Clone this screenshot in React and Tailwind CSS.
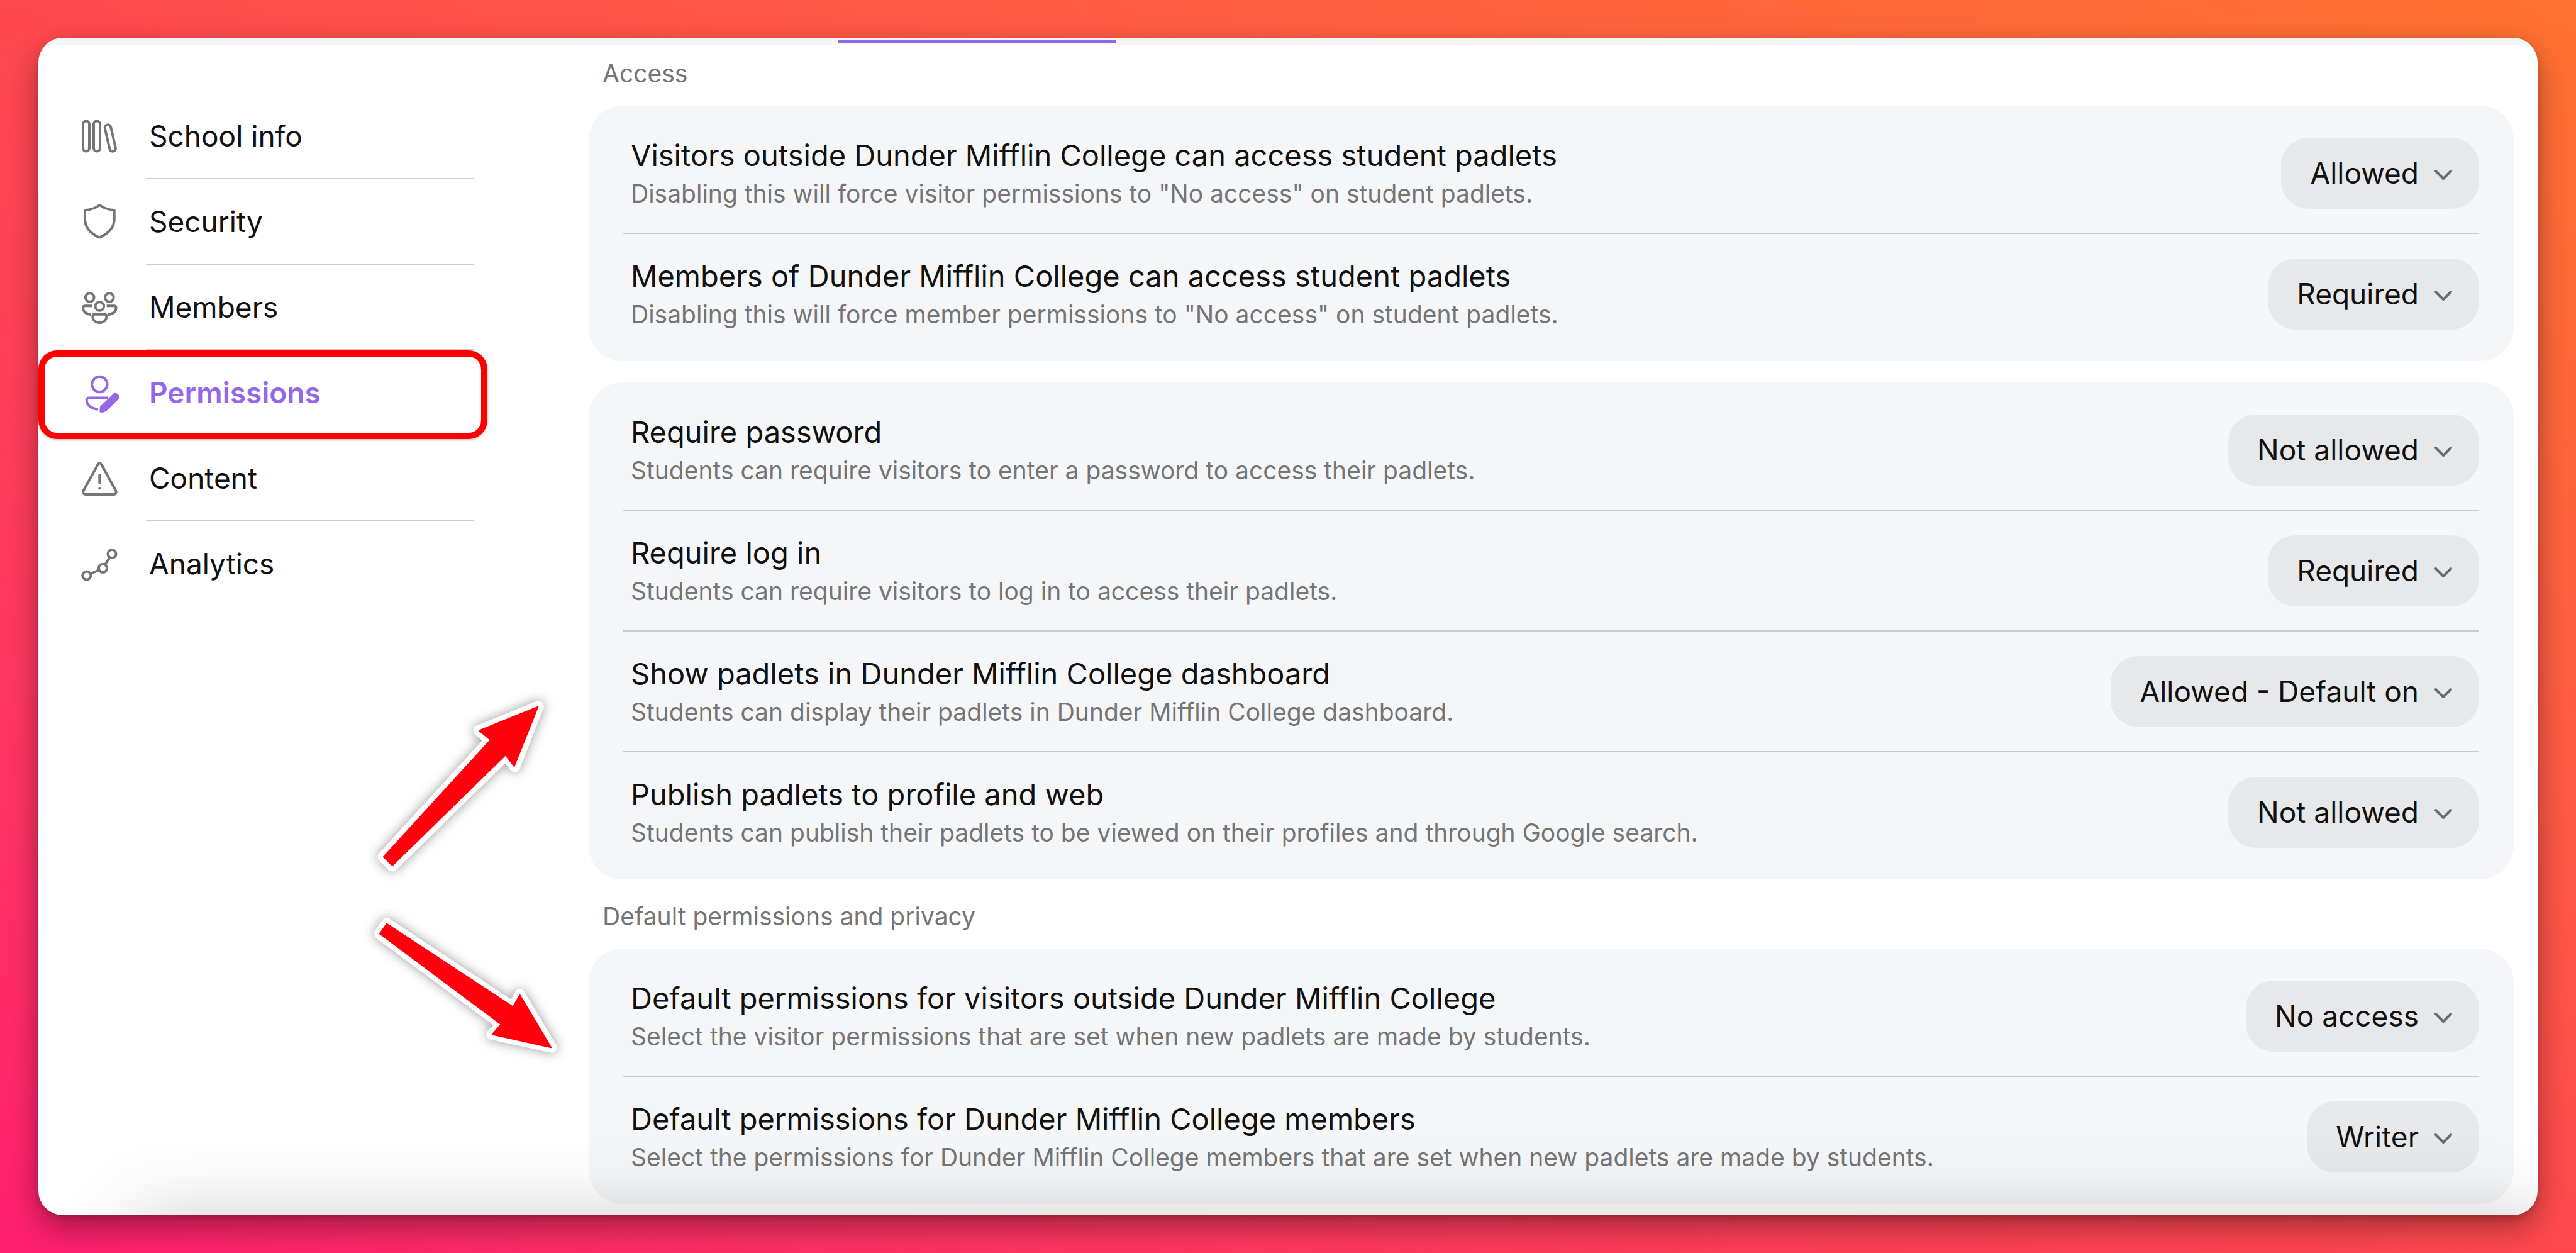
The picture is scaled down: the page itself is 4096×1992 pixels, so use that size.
const GROUPS = [
  {
    heading: 'Access',
    cards: [
      [
        {
          id: 'visitor-access',
          title: 'Visitors outside Dunder Mifflin College can access student padlets',
          description: 'Disabling this will force visitor permissions to "No access" on student padlets.',
          value: 'Allowed',
        },
        {
          id: 'member-access',
          title: 'Members of Dunder Mifflin College can access student padlets',
          description: 'Disabling this will force member permissions to "No access" on student padlets.',
          value: 'Required',
        },
      ],
      [
        {
          id: 'require-password',
          title: 'Require password',
          description: 'Students can require visitors to enter a password to access their padlets.',
          value: 'Not allowed',
        },
        {
          id: 'require-login',
          title: 'Require log in',
          description: 'Students can require visitors to log in to access their padlets.',
          value: 'Required',
        },
        {
          id: 'show-in-dashboard',
          title: 'Show padlets in Dunder Mifflin College dashboard',
          description: 'Students can display their padlets in Dunder Mifflin College dashboard.',
          value: 'Allowed - Default on',
        },
        {
          id: 'publish',
          title: 'Publish padlets to profile and web',
          description: 'Students can publish their padlets to be viewed on their profiles and through Google search.',
          value: 'Not allowed',
        },
      ],
    ],
  },
  {
    heading: 'Default permissions and privacy',
    cards: [
      [
        {
          id: 'default-visitors',
          title: 'Default permissions for visitors outside Dunder Mifflin College',
          description: 'Select the visitor permissions that are set when new padlets are made by students.',
          value: 'No access',
        },
        {
          id: 'default-members',
          title: 'Default permissions for Dunder Mifflin College members',
          description:
            'Select the permissions for Dunder Mifflin College members that are set when new padlets are made by students.',
          value: 'Writer',
        },
      ],
    ],
  },
];

function Icon({ viewBox, children }) {
  return (
    <svg
      viewBox={viewBox}
      className="size-20 shrink-0"
      fill="none"
      stroke="currentColor"
      strokeWidth="4"
      strokeLinecap="round"
      strokeLinejoin="round"
      aria-hidden="true"
    >
      {children}
    </svg>
  );
}

const NAV = [
  {
    label: 'School info',
    icon: (
      <Icon viewBox="0 -3 80 80">
        <rect x="13" y="12.5" width="10" height="48" rx="4.8" />
        <rect x="30" y="12.5" width="10" height="48" rx="4.8" />
        <rect x="51.5" y="18" width="9.6" height="43" rx="4.6" transform="rotate(-13 56.3 39.5)" />
      </Icon>
    ),
  },
  {
    label: 'Security',
    icon: (
      <Icon viewBox="0 -1 80 80">
        <path d="M39.3 12C33 16.8 25 19.6 16 20V34C16 48 24 57 38.9 63.5C54.5 57 62.7 48 62.7 34V20C54 19.6 45.8 16.8 39.3 12Z" />
      </Icon>
    ),
  },
  {
    label: 'Members',
    icon: (
      <Icon viewBox="0 1 80 80">
        <circle cx="23.7" cy="25" r="6.8" />
        <circle cx="54.9" cy="25" r="6.8" />
        <circle cx="39.3" cy="39" r="6.8" />
        <path strokeLinecap="butt" d="M28 38.3H16.2C14.2 38.3 13 39.4 13 41.5C13 47 17.5 51.5 26 52M50.6 38.3H62.4C64.4 38.3 65.6 39.4 65.6 41.5C65.6 47 61 51.5 52.6 52" />
        <path d="M31 51.8H47.6C49.4 51.8 50.3 52.8 50.3 54.4C50.3 61 46 65 39.3 65S28.3 61 28.3 54.4C28.3 52.8 29.2 51.8 31 51.8Z" />
      </Icon>
    ),
  },
  {
    label: 'Permissions',
    active: true,
    icon: (
      <Icon viewBox="0 -2 80 80">
        <circle cx="39.3" cy="24" r="12.2" />
        <path strokeLinecap="butt" d="M52 45.5H22.5C20 45.5 18.7 46.8 18.7 49.2C18.7 57 26 63 37 63.5" />
        <path
          stroke="none"
          fill="currentColor"
          d="M40 59.5L60.5 39.5C63 37.4 66.5 37.7 69 40C71.2 42.3 71.2 45.8 69 48L50.5 66.3C49.2 67.5 46.5 68.4 42.5 69C40.4 69.3 39.3 68.2 39.4 66Z"
        />
      </Icon>
    ),
  },
  {
    label: 'Content',
    icon: (
      <Icon viewBox="0 0 80 80">
        <path d="M36.7 17.3C38 15 40.8 15 42.1 17.3L65 58.8C66.6 61.8 65 65 61.6 65H17.2C13.8 65 12.2 61.8 13.8 58.8Z" />
        <path d="M39.3 34V46.5" />
        <path d="M39.3 55.5V55.6" />
      </Icon>
    ),
  },
  {
    label: 'Analytics',
    icon: (
      <Icon viewBox="0 1 80 80">
        <circle cx="18.8" cy="59" r="6.6" />
        <circle cx="44.5" cy="47.3" r="6.6" />
        <circle cx="59" cy="24.5" r="6.6" />
        <path d="M25 56.2L38.3 50.2M48 41.6L55.4 30.2" />
      </Icon>
    ),
  },
];

function NavItem({ label, icon, active, last }) {
  return (
    <li className="relative">
      <a
        href="#"
        aria-current={active ? 'page' : undefined}
        className={
          active ? 'flex h-[136px] pl-[58px] text-[#9467e8]' : 'flex h-[136px] pl-[58px] text-[#757575]'
        }
      >
        <span className="flex items-center">{icon}</span>
        <span
          className={
            'ml-[33px] flex w-[522px] items-center pl-[5px] text-[46px] leading-[58px] border-b-2 ' +
            (last ? 'border-transparent ' : 'border-[#cfcfcf] ') +
            (active ? 'font-semibold text-[#9467e8]' : 'text-[#111111]')
          }
        >
          {label}
        </span>
      </a>
      {active && (
        <div className="pointer-events-none absolute left-0 top-0 z-10 h-[141px] w-[714px] rounded-[30px] border-10 border-[#ff0000] shadow-[0_1px_4px_rgba(0,0,0,0.3)]" />
      )}
    </li>
  );
}

function Setting({ id, title, description, value }) {
  return (
    <div className="flex h-[190px] items-center justify-between pl-3">
      <div className="flex flex-col gap-2">
        <label htmlFor={id} className="text-[47px] leading-[58px] text-[#111111]">
          {title}
        </label>
        <p id={id + '-hint'} className="text-[39px] leading-[48px] text-[#757575]">
          {description}
        </p>
      </div>
      <div className="relative flex items-center">
        <select
          id={id}
          aria-describedby={id + '-hint'}
          defaultValue={value}
          className="field-sizing-content h-[113px] appearance-none rounded-[44px] bg-[#e7e8ea] pl-[46px] pr-[96px] text-[46px] leading-[58px] text-[#111111]"
        >
          <option>{value}</option>
        </select>
        <svg
          viewBox="0 0 32 24"
          className="pointer-events-none absolute right-[41px] h-6 w-8"
          fill="none"
          stroke="#6b6c6e"
          strokeWidth="4"
          strokeLinecap="round"
          strokeLinejoin="round"
          aria-hidden="true"
        >
          <path d="M4 9L16 21L28 9" />
        </svg>
      </div>
    </div>
  );
}

function Arrows() {
  return (
    <svg
      viewBox="560 1080 400 640"
      className="pointer-events-none absolute left-[496px] top-[1014px] h-[636px] w-[398px] drop-shadow-[0_0_9px_rgba(0,0,0,0.4)]"
      fill="#ff000c"
      strokeLinejoin="round"
      aria-hidden="true"
    >
      <g stroke="#ffffff" strokeWidth="17">
        <path d="M861 1129L765 1168L783 1183L612 1370L627 1385L808 1208L823 1226Z" />
        <path d="M882 1675L831 1590L820 1610L618 1476L606 1493L801 1638L786 1654Z" />
      </g>
      <g stroke="#ff000c" strokeWidth="2">
        <path d="M860 1130L766 1168L784 1183L613 1370L627 1384L808 1207L822 1225Z" />
        <path d="M881 1675L831 1591L820 1610L618 1477L607 1493L801 1638L787 1654Z" />
      </g>
    </svg>
  );
}

export default function App() {
  return (
    <div className="flex min-h-screen flex-col bg-linear-to-tr from-[#ff1e6f] via-[#ff494e] to-[#ff722f] px-[61px] py-[60px] font-[Inter,sans-serif]">
      <div className="relative flex grow flex-col overflow-hidden rounded-[39px] bg-white shadow-[0_20px_50px_rgba(0,0,0,0.36),0_4px_10px_rgba(0,0,0,0.15)]">
        <div className="flex h-[11px] items-center bg-[#f5f6f8] pl-[1272px]">
          <div className="h-1 w-[442px] bg-[#9467e8]" />
        </div>

        <div className="flex">
          <nav className="w-[875px] shrink-0 pt-[78px]" aria-label="Settings">
            <ul>
              {NAV.map((item, i) => (
                <NavItem key={item.label} {...item} last={i === NAV.length - 1} />
              ))}
            </ul>
          </nav>

          <main className="grow pr-[38px]">
            {GROUPS.map((group, g) => (
              <section key={group.heading} className={g === 0 ? 'pt-[22px]' : 'pt-[35px]'}>
                <h2 className="mb-[27px] pl-[22px] text-[39px] leading-[48px] text-[#757575]">{group.heading}</h2>
                <div className="flex flex-col gap-[34px]">
                  {group.cards.map((card) => (
                    <div
                      key={card[0].id}
                      className="divide-y-2 divide-[#c9cacc] rounded-[54px] bg-[#f5f6f8] px-[55px] py-3"
                    >
                      {card.map((setting) => (
                        <div key={setting.id}>
                          <Setting {...setting} />
                        </div>
                      ))}
                    </div>
                  ))}
                </div>
              </section>
            ))}
          </main>
        </div>

        <Arrows />
        <div className="pointer-events-none absolute -right-5 left-[150px] top-full h-[200px] shadow-[0_0_120px_rgba(0,0,0,0.2)]" />
      </div>
    </div>
  );
}
